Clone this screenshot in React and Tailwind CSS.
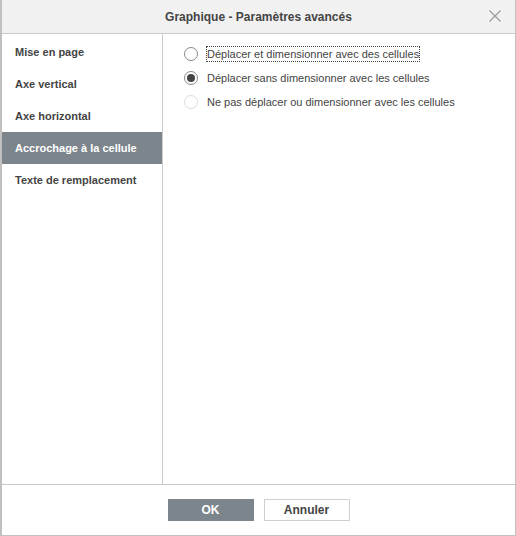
export default function App() {
  const items = [
    "Mise en page",
    "Axe vertical",
    "Axe horizontal",
    "Accrochage à la cellule",
    "Texte de remplacement",
  ];
  const selected = 3;
  const options = [
    { label: "Déplacer et dimensionner avec des cellules", state: "focus" },
    { label: "Déplacer sans dimensionner avec les cellules", state: "checked" },
    { label: "Ne pas déplacer ou dimensionner avec les cellules", state: "disabled" },
  ];
  return (
    <div
      className="w-[516px] h-[536px] bg-white flex flex-col border-l-2 border-r border-b border-[#c0c0c0] text-[#444]"
      style={{ fontFamily: '"Liberation Sans", Arial, sans-serif' }}
    >
      <div className="h-[34px] shrink-0 bg-[#f1f1f1] border-b border-[#cbcbcb] flex items-center justify-center relative">
        <span className="text-[12px] font-bold text-[#444]">Graphique - Paramètres avancés</span>
        <svg className="absolute right-[14px] top-[10px]" width="12" height="12" viewBox="0 0 12 12">
          <path d="M0.5 0.5 L11.5 11.5 M11.5 0.5 L0.5 11.5" stroke="#9a9a9a" strokeWidth="1.2" fill="none" />
        </svg>
      </div>
      <div className="flex flex-1 min-h-0">
        <div className="w-[161px] shrink-0 border-r border-[#cbcbcb] pt-[2px]">
          {items.map((t, i) => (
            <div
              key={t}
              className={
                "h-[32px] flex items-center pl-[13px] text-[11px] font-bold " +
                (i === selected ? "bg-[#7d858c] text-white" : "text-[#444]")
              }
            >
              {t}
            </div>
          ))}
        </div>
        <div className="flex-1 pl-[21px] pt-[13px] flex flex-col gap-[10px]">
          {options.map((o) => (
            <div key={o.label} className="flex items-center h-[14px]">
              <span
                className={
                  "w-[14px] h-[14px] rounded-full border bg-white flex items-center justify-center " +
                  (o.state === "disabled" ? "border-[#dddddd]" : "border-[#888]")
                }
              >
                {o.state === "checked" && <span className="w-[8px] h-[8px] rounded-full bg-[#444]" />}
              </span>
              <span
                className={
                  "ml-[9px] text-[11px] leading-[14px] " +
                  (o.state === "focus" ? "outline outline-1 outline-dotted outline-[#444] " : "") +
                  "text-[#444]"
                }
              >
                {o.label}
              </span>
            </div>
          ))}
        </div>
      </div>
      <div className="h-[51px] shrink-0 border-t border-[#cbcbcb] flex items-start justify-center gap-[10px] pt-[14px]">
        <button className="w-[86px] h-[22px] bg-[#7d858c] text-white text-[12px] font-bold">OK</button>
        <button className="w-[86px] h-[22px] bg-white border border-[#cfcfcf] text-[#444] text-[12px] font-bold">Annuler</button>
      </div>
    </div>
  );
}
